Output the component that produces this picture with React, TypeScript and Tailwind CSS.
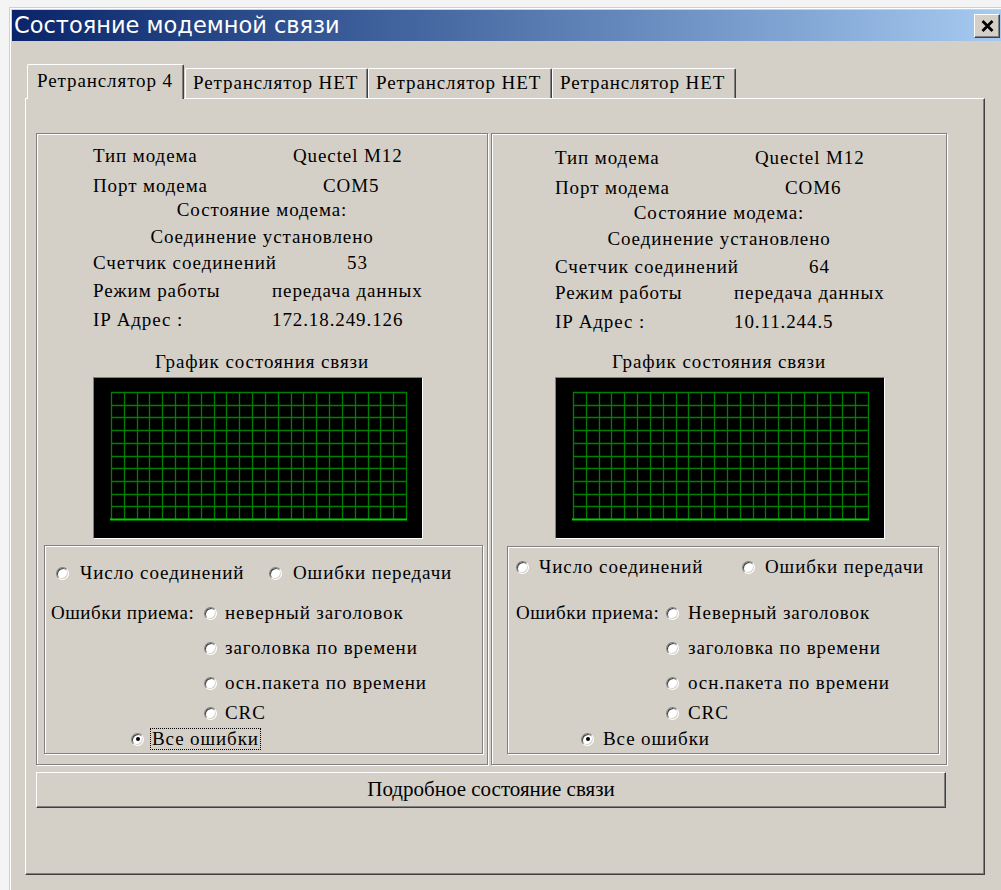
import React from 'react';

type Side = {
  com: string;
  count: string;
  ip: string;
  labelPad: string;
  rowsTop: string;
  rowGaps: string[];
  titleGap: string;
  chartPad: string;
  subBox: string;
  subRowsTop: string;
  subRowGaps: string[];
  r1Pad: string;
  r1Width: string;
  r1Gap: string;
  r2Pad: string;
  r2Width: string;
  r2Gap: string;
  rIndent: string;
  allIndent: string;
  width: string;
  focused: boolean;
  firstError: string;
};

const sides: Side[] = [
  {
    com: 'COM5',
    count: '53',
    ip: '172.18.249.126',
    labelPad: 'pl-[56px]',
    rowsTop: 'pt-[12px]',
    rowGaps: ['', 'mt-[10px]', 'mt-[4px]', 'mt-[7px]', 'mt-[6px]', 'mt-[8px]', 'mt-[9px]'],
    titleGap: 'mt-[22px]',
    chartPad: 'pl-[56px]',
    subBox: 'ml-[7px] mt-[6px] w-[439px] h-[209px]',
    subRowsTop: 'pt-[17px]',
    subRowGaps: ['', 'mt-[20px]', 'mt-[15px]', 'mt-[15px]', 'mt-[10px]', 'mt-[5px]'],
    r1Pad: 'pl-[11px]',
    r1Width: 'w-[213px]',
    r1Gap: 'gap-[11px]',
    r2Pad: 'pl-[6px]',
    r2Width: 'w-[153px]',
    r2Gap: 'gap-[8px]',
    rIndent: 'pl-[159px] gap-[8px]',
    allIndent: 'pl-[86px]',
    width: 'w-[452px]',
    focused: true,
    firstError: 'неверный заголовок',
  },
  {
    com: 'COM6',
    count: '64',
    ip: '10.11.244.5',
    labelPad: 'pl-[63px]',
    rowsTop: 'pt-[14px]',
    rowGaps: ['', 'mt-[10px]', 'mt-[5px]', 'mt-[6px]', 'mt-[8px]', 'mt-[6px]', 'mt-[9px]'],
    titleGap: 'mt-[20px]',
    chartPad: 'pl-[63px]',
    subBox: 'ml-[15px] mt-[7px] w-[432px] h-[208px]',
    subRowsTop: 'pt-[10px]',
    subRowGaps: ['', 'mt-[26px]', 'mt-[15px]', 'mt-[15px]', 'mt-[10px]', 'mt-[5px]'],
    r1Pad: 'pl-[8px]',
    r1Width: 'w-[226px]',
    r1Gap: 'gap-[10px]',
    r2Pad: 'pl-[8px]',
    r2Width: 'w-[150px]',
    r2Gap: 'gap-[9px]',
    rIndent: 'pl-[158px] gap-[9px]',
    allIndent: 'pl-[73px]',
    width: 'w-[456px]',
    focused: false,
    firstError: 'Неверный заголовок',
  },
];

function Radio({ checked = false }: { checked?: boolean }) {
  return (
    <span className="relative flex h-[13px] w-[13px] shrink-0 items-center justify-center rounded-full border border-t-[#808080] border-l-[#808080] border-r-white border-b-white bg-white shadow-[inset_1px_1px_0_#404040,inset_-1px_-1px_0_#d4d0c8]">
      {checked && <span className="h-[4px] w-[4px] rounded-full bg-black" />}
    </span>
  );
}

function LinkChart() {
  const x0 = 18;
  const x1 = 313;
  const y0 = 15;
  const y1 = 142;
  const cols = 23;
  const rows = 10;
  const vx = Array.from({ length: cols + 1 }, (_, i) => x0 + ((x1 - x0) * i) / cols);
  const hy = Array.from({ length: rows }, (_, i) => y0 + ((y1 - y0) * i) / rows);
  return (
    <div className="h-[162px] w-[330px] border border-t-[#808080] border-l-[#808080] border-r-white border-b-white bg-black">
      <svg width="328" height="160" viewBox="1 1 328 160" className="block">
        {vx.map((x) => (
          <line key={'v' + x} x1={Math.round(x) + 0.5} y1={y0} x2={Math.round(x) + 0.5} y2={y1} stroke="#008000" strokeWidth="1.3" />
        ))}
        {hy.map((y) => (
          <line key={'h' + y} x1={x0} y1={Math.round(y) + 0.5} x2={x1 + 1} y2={Math.round(y) + 0.5} stroke="#008000" strokeWidth="1.3" />
        ))}
        <line x1={x0 - 1} y1={y1 + 0.5} x2={x1 + 1} y2={y1 + 0.5} stroke="#00d000" strokeWidth="2" />
      </svg>
    </div>
  );
}

function ModemGroup({ s }: { s: Side }) {
  const info: [string, string, string][] = [
    ['Тип модема', 'Quectel M12', 'w-[200px]'],
    ['Порт модема', s.com, 'w-[230px]'],
  ];
  const tail: [string, string, string][] = [
    ['Счетчик соединений', s.count, 'w-[254px]'],
    ['Режим работы', 'передача данных', 'w-[179px]'],
    ['IP Адрес :', s.ip, 'w-[179px]'],
  ];
  return (
    <div className={`${s.width} h-[632px] border border-[#808080] shadow-[inset_1px_1px_0_#fff,1px_1px_0_#fff] ${s.rowsTop}`}>
      {info.map(([label, value, w], i) => (
        <div key={label} className={`flex h-[20px] items-center whitespace-nowrap ${s.labelPad} ${s.rowGaps[i]}`}>
          <span className={w}>{label}</span>
          <span>{value}</span>
        </div>
      ))}
      <div className={`flex h-[20px] items-center justify-center whitespace-nowrap ${s.rowGaps[2]}`}>Состояние модема:</div>
      <div className={`flex h-[20px] items-center justify-center whitespace-nowrap ${s.rowGaps[3]}`}>Соединение установлено</div>
      {tail.map(([label, value, w], i) => (
        <div key={label} className={`flex h-[20px] items-center whitespace-nowrap ${s.labelPad} ${s.rowGaps[i + 4]}`}>
          <span className={w}>{label}</span>
          <span>{value}</span>
        </div>
      ))}

      <div className={`flex h-[20px] items-center justify-center ${s.titleGap}`}>График состояния связи</div>
      <div className={`mt-[5px] ${s.chartPad}`}>
        <LinkChart />
      </div>

      <div className={`${s.subBox} border border-[#808080] shadow-[inset_1px_1px_0_#fff,1px_1px_0_#fff] ${s.subRowsTop}`}>
        <div className={`flex h-[20px] items-center whitespace-nowrap ${s.r1Pad}`}>
          <label className={`flex items-center ${s.r1Width} ${s.r1Gap}`}>
            <Radio />
            <span>Число соединений</span>
          </label>
          <label className={`flex items-center ${s.r1Gap}`}>
            <Radio />
            <span>Ошибки передачи</span>
          </label>
        </div>
        <div className={`flex h-[20px] items-center whitespace-nowrap ${s.r2Pad} ${s.subRowGaps[1]}`}>
          <span className={`${s.r2Width} tracking-[0.5px]`}>Ошибки приема:</span>
          <label className={`flex items-center ${s.r2Gap}`}>
            <Radio />
            <span>{s.firstError}</span>
          </label>
        </div>
        {['заголовка по времени', 'осн.пакета по времени', 'CRC'].map((t, i) => (
          <div key={t} className={`flex h-[20px] items-center whitespace-nowrap ${s.rIndent} ${s.subRowGaps[i + 2]}`}>
            <Radio />
            <span>{t}</span>
          </div>
        ))}
        <div className={`flex h-[22px] items-center whitespace-nowrap ${s.allIndent} ${s.subRowGaps[5]}`}>
          <Radio checked />
          {s.focused ? (
            <span className="ml-[6px] border border-dotted border-black px-[1px] leading-[20px]">Все ошибки</span>
          ) : (
            <span className="ml-[9px]">Все ошибки</span>
          )}
        </div>
      </div>
    </div>
  );
}

export default function App() {
  const tabs = ['Ретранслятор НЕТ', 'Ретранслятор НЕТ', 'Ретранслятор НЕТ'];
  return (
    <div className="h-[890px] w-[1001px] overflow-hidden bg-[#f4f4f4] pl-[9px] pt-[7px] font-['Liberation_Serif',serif] text-[19px] tracking-[0.9px] text-black">
      <div className="h-[900px] border-l border-t border-[#d4d0c8] bg-[#d4d0c8]">
        <div className="h-full border-l border-t border-white pl-[1px] pt-[1px]">
          {/* caption */}
          <div className="flex h-[31px] items-center justify-between bg-gradient-to-r from-[#0a246a] to-[#a6caf0] pl-[2px] pr-[1px]">
            <span className="font-['DejaVu_Sans',sans-serif] text-[22.5px] leading-none tracking-normal text-white">Состояние модемной связи</span>
            <button className="flex h-[24px] w-[26px] items-center justify-center border border-t-white border-l-white border-r-[#404040] border-b-[#404040] bg-[#d4d0c8] shadow-[inset_-1px_-1px_0_#808080]">
              <svg width="13" height="12" viewBox="0 0 13 12">
                <path d="M1.5 1 L11.5 11 M11.5 1 L1.5 11" stroke="#000" strokeWidth="2.8" />
              </svg>
            </button>
          </div>

          <div className="pl-[13px] pt-[23px]">
            {/* tab strip */}
            <div className="flex h-[34px] items-end pl-[2px]">
              <div className="relative z-10 -mb-[1px] flex h-[35px] w-[157px] items-start rounded-t-[2px] border-l border-t border-r border-l-white border-t-white border-r-[#404040] bg-[#d4d0c8] pl-[9px] pt-[2px] shadow-[inset_-1px_0_0_#808080]">
                Ретранслятор 4
              </div>
              {tabs.map((t, i) => (
                <div
                  key={i}
                  className={`flex h-[30px] items-start whitespace-nowrap rounded-t-[2px] border-l border-t border-r border-l-white border-t-white border-r-[#404040] pl-[7px] pt-0 shadow-[inset_-1px_0_0_#808080] ${i === 0 ? 'ml-[1px] w-[183px]' : 'w-[184px]'}`}
                >
                  {t}
                </div>
              ))}
            </div>

            {/* tab page */}
            <div className="h-[777px] w-[960px] border border-t-white border-l-white border-r-[#404040] border-b-[#404040] pl-[10px] pt-[34px] shadow-[inset_-1px_-1px_0_#808080]">
              <div className="flex gap-[3px]">
                {sides.map((s) => (
                  <ModemGroup key={s.com} s={s} />
                ))}
              </div>
              <button className="mt-[7px] flex h-[36px] w-[910px] items-center justify-center border border-t-white border-l-white border-r-[#404040] border-b-[#404040] bg-[#d4d0c8] text-[21px] tracking-[0px] shadow-[inset_-1px_-1px_0_#808080]">
                Подробное состояние связи
              </button>
            </div>
          </div>
        </div>
      </div>
    </div>
  );
}
